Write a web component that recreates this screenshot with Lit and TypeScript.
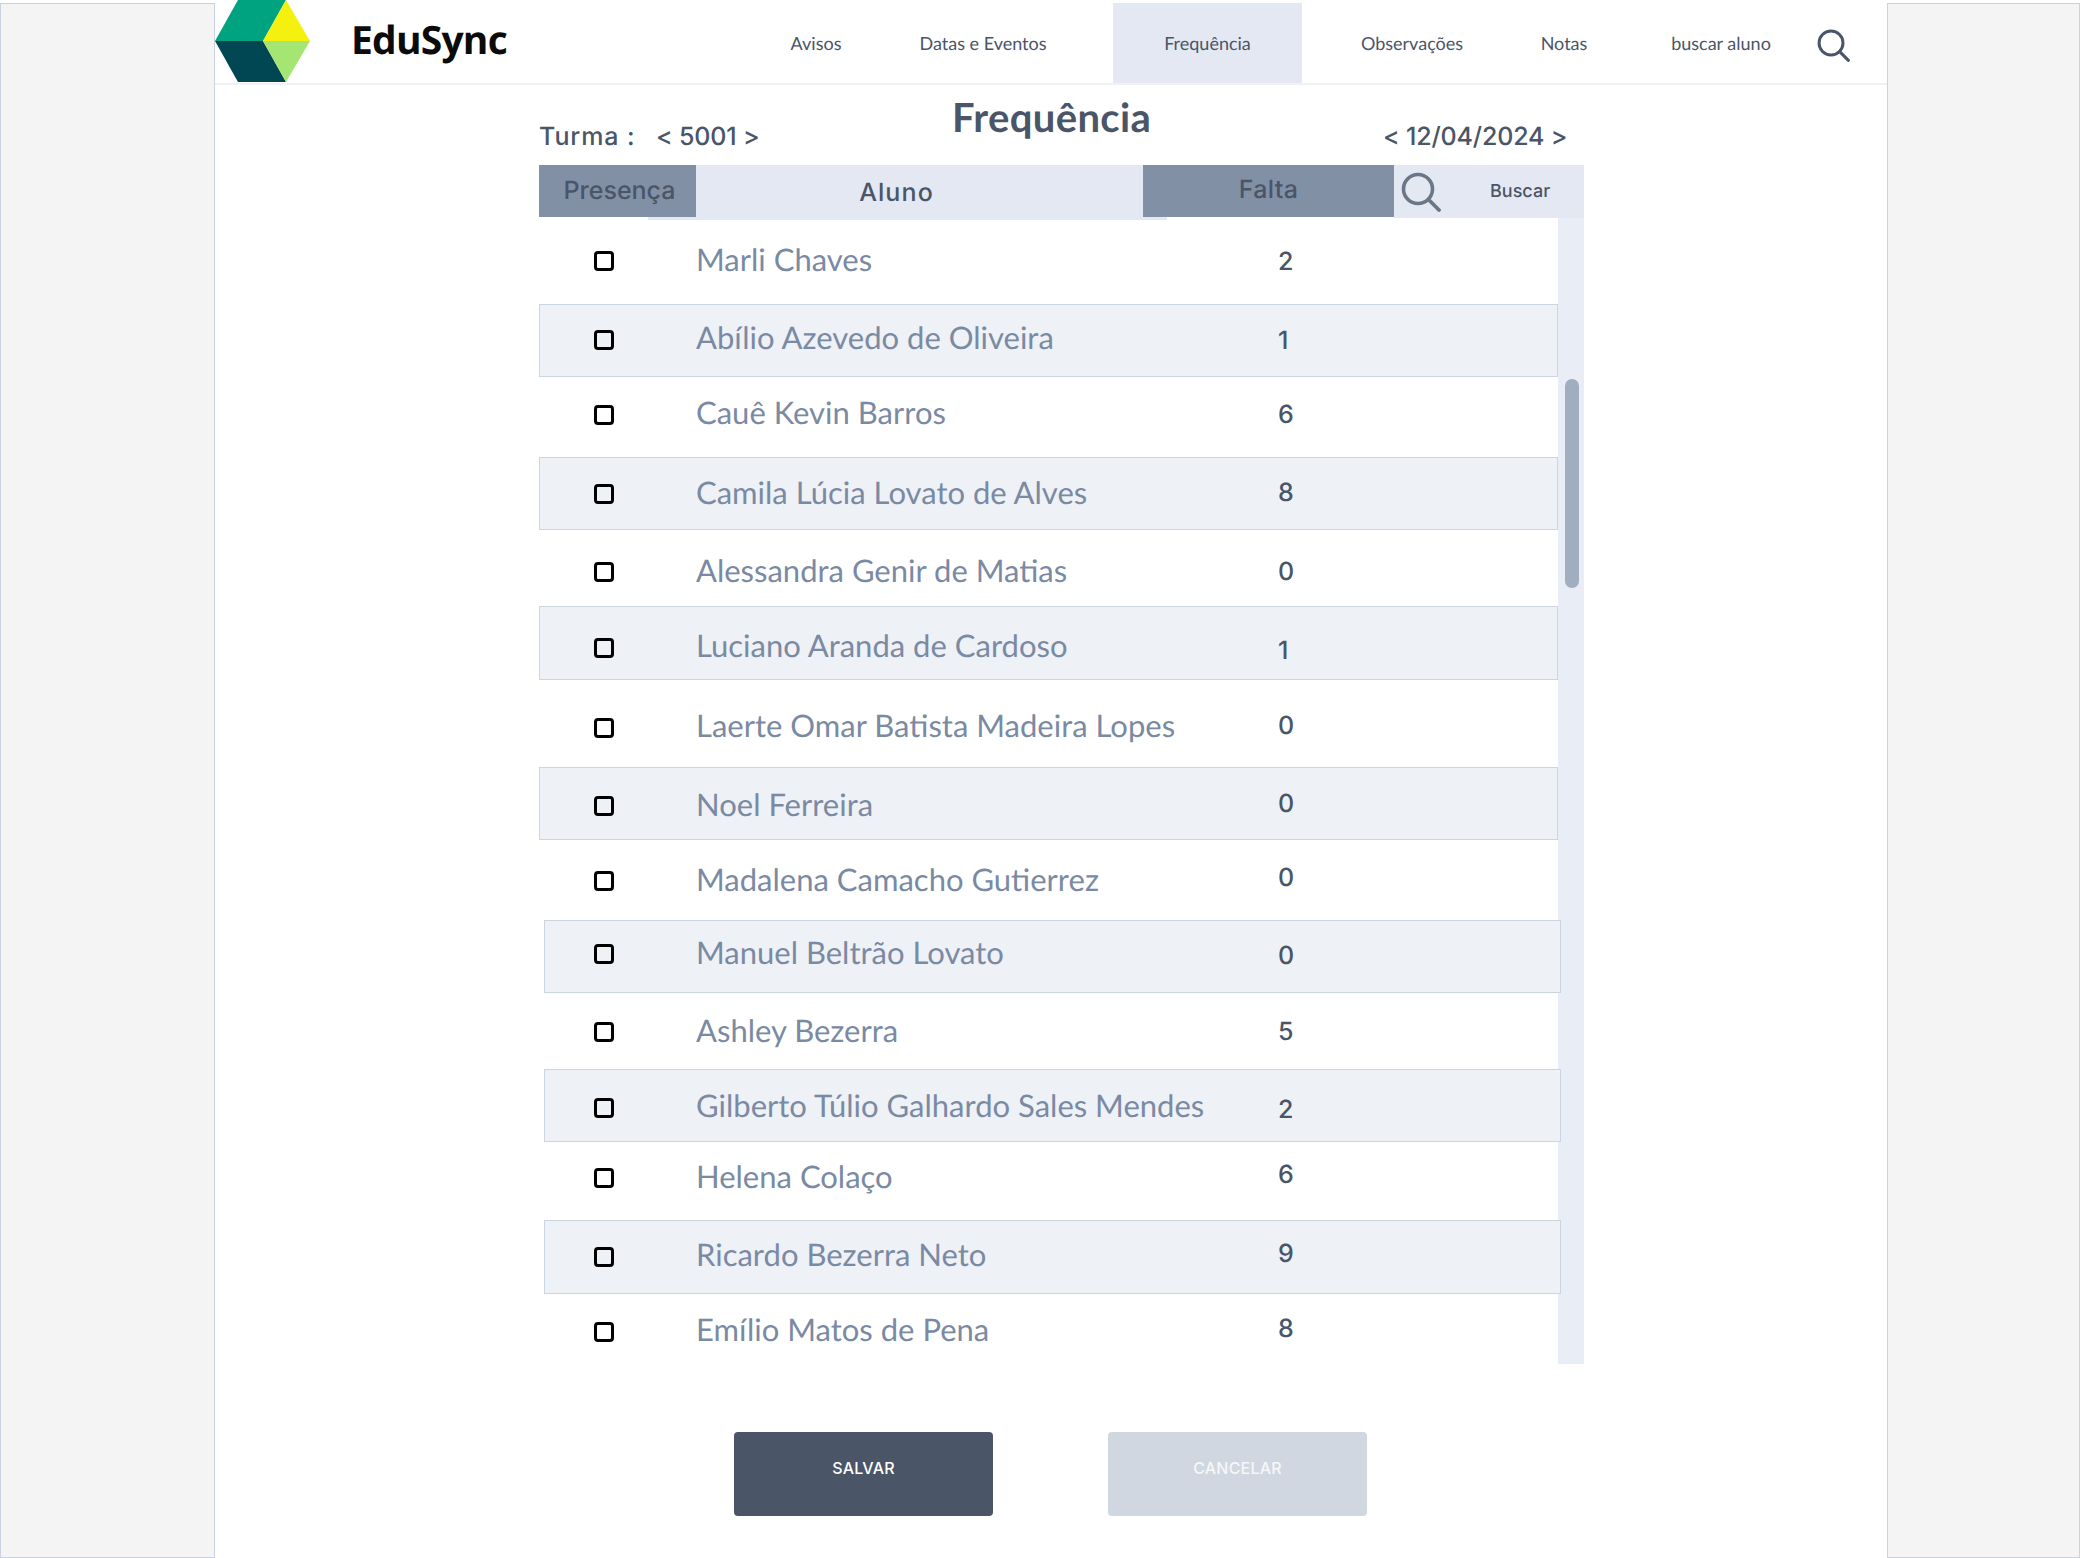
import { LitElement, html, css } from "lit";
import { customElement } from "lit/decorators.js";

const ROWS: [string, string, number, number, number, number, number, boolean, boolean][] = [
  ["Marli Chaves", "2", 218, 86, 259, 262, 261, false, false],
  ["Abílio Azevedo de Oliveira", "1", 304, 73, 337, 341, 340, true, false],
  ["Cauê Kevin Barros", "6", 377, 80, 412, 415, 415, false, false],
  ["Camila Lúcia Lovato de Alves", "8", 457, 73, 492, 493, 494, true, false],
  ["Alessandra Genir de Matias", "0", 530, 76, 570, 572, 572, false, false],
  ["Luciano Aranda de Cardoso", "1", 606, 74, 645, 651, 648, true, false],
  ["Laerte Omar Batista Madeira Lopes", "0", 680, 87, 725, 726, 728, false, false],
  ["Noel Ferreira", "0", 767, 73, 804, 804, 806, true, false],
  ["Madalena Camacho Gutierrez", "0", 840, 80, 879, 878, 881, false, false],
  ["Manuel Beltrão Lovato", "0", 920, 73, 952, 956, 954, true, true],
  ["Ashley Bezerra", "5", 993, 76, 1030, 1032, 1032, false, false],
  ["Gilberto Túlio Galhardo Sales Mendes", "2", 1069, 73, 1105, 1110, 1108, true, true],
  ["Helena Colaço", "6", 1142, 78, 1176, 1175, 1178, false, false],
  ["Ricardo Bezerra Neto", "9", 1220, 74, 1254, 1254, 1257, true, true],
  ["Emílio Matos de Pena", "8", 1294, 70, 1329, 1329, 1332, false, false],
];

const search = (cls: string) => html`<svg class=${cls} viewBox="0 0 40 40" aria-hidden="true"><circle cx="17" cy="17" r="14.5" fill="none" stroke="currentColor" stroke-width="3.6"/><line x1="27.5" y1="27.5" x2="38" y2="38" stroke="currentColor" stroke-width="3.8" stroke-linecap="round"/></svg>`;

@customElement("app-root")
export class AppRoot extends LitElement {
  static styles = css`
    :host { display: flex; width: 2080px; height: 1558px; background: #fff; font-family: Lato, sans-serif; color: #4a5568; overflow: hidden; text-rendering: geometricPrecision; }
    .side { box-sizing: border-box; margin-top: 3px; height: 1555px; background: #f4f4f4; border: 1px solid #c8d2e0; }
    .left { width: 215px; }
    .right { width: 193px; }
    main { width: 1672px; }
    header { display: flex; height: 83px; border-bottom: 2px solid #edf2f7; }
    .logo { width: 96px; height: 82px; display: block; flex: none; }
    .brand { margin-left: 40px; width: 202px; font: 700 39px/80px "Open Sans", sans-serif; color: #0b0b0b; letter-spacing: -0.8px; }
    nav { display: flex; margin-left: 207px; align-items: stretch; }
    .item { display: flex; align-items: center; justify-content: center; font-size: 18px; height: 80px; margin-top: 3px; box-sizing: border-box; }
    .i1 { width: 112px; }
    .i2 { width: 222px; }
    .i3 { width: 189px; margin-left: 19px; background: #e4e8f2; }
    .i4 { width: 220px; }
    .i5 { width: 84px; }
    .i6 { width: 150px; margin-left: 40px; }
    .top-search { width: 33px; height: 33px; margin: 29px 0 0 21px; color: #4a5568; }
    .content { margin-left: 324px; width: 1045px; }
    .titlebar { display: grid; grid-template-columns: 413px 431px 1fr; height: 80px; }
    .meta { font: 500 25px/1 Inter, sans-serif; margin-top: 40px; white-space: nowrap; display: flex; }
    .turma { letter-spacing: 0.9px; width: 117px; }
    .nr { letter-spacing: -0.15px; }
    .title { margin: 0; font: 700 40px/60px Lato, sans-serif; margin-top: 2px; letter-spacing: 0.35px; }
    .thead { display: flex; height: 53px; align-items: flex-start; font: 500 25px/52px Inter, sans-serif; }
    .th { text-align: center; height: 53px; }
    .on { position: relative; z-index: 1; background: #8290a6; height: 52px; }
    .c1 { width: 157px; padding-left: 4px; box-sizing: border-box; }
    .c2 { width: 519px; height: 55px; margin: 0 -24px 0 -48px; background: #e4e8f2; padding-left: 48px; padding-right: 24px; box-sizing: border-box; line-height: 57px; }
    .c2 span { display: inline-block; margin-left: -46px; letter-spacing: 1.1px; }
    .c3 { width: 251px; letter-spacing: 0.3px; line-height: 50px; }
    .c4 { width: 190px; background: #e4e8f2; display: flex; align-items: center; }
    .head-search { width: 40px; height: 40px; margin-left: 7px; color: #6b7686; }
    .c4 span { font: 500 18px Inter, sans-serif; margin-left: 49px; }
    .body { display: flex; }
    .rows { width: 1019px; flex: none; }
    .row { display: grid; grid-template-columns: 55px 102px 582px 1fr; align-items: start; position: relative; z-index: 1; }
    .striped { background: #eef1f6; box-shadow: inset 0 0 0 1px #cbd5e0; }
    .shift { margin-left: 5px; margin-right: -3px; grid-template-columns: 50px 102px 582px 1fr; }
    .row > div { height: 40px; line-height: 40px; }
    .cb { width: 20px; box-sizing: border-box; border: 3px solid #000; border-radius: 4px; }
    .row > .cb { height: 20px; }
    .name { font-size: 31px; color: #7a8aa3; white-space: nowrap; }
    .count { font: 500 25px/40px Inter, sans-serif; }
    .track { width: 26px; background: #e9edf5; height: 1146px; flex: none; }
    .thumb { width: 14px; height: 209px; margin: 161px 0 0 7px; border-radius: 7px; background: #a0aec0; }
    .actions { display: flex; gap: 115px; margin: 68px 0 0 195px; }
    .btn { width: 259px; height: 84px; border-radius: 4px; border: 0; padding: 0 0 12px; font: 500 16px Inter, sans-serif; letter-spacing: 0.2px; color: #fff; background: #4a5568; }
    .muted { background: #d0d7e0; color: #f5f7f9; }
  `;

  render() {
    return html`
      <div class="side left"></div>
      <main>
        <header>
          <svg class="logo" viewBox="0 0 96 82" aria-label="EduSync logo">
            <polygon points="0,41 23,0 71,0 48,41" fill="#00a37f"/>
            <polygon points="71,0 95,41 48,41" fill="#f4f010"/>
            <polygon points="0,41 48,41 71,82 23,82" fill="#004753"/>
            <polygon points="48,41 95,41 71,82" fill="#a5e672"/>
          </svg>
          <div class="brand">EduSync</div>
          <nav>
            <div class="item i1">Avisos</div>
            <div class="item i2">Datas e Eventos</div>
            <div class="item i3">Frequência</div>
            <div class="item i4">Observações</div>
            <div class="item i5">Notas</div>
            <div class="item i6">buscar aluno</div>
          </nav>
          ${search("top-search")}
        </header>
        <div class="content">
          <div class="titlebar">
            <div class="meta"><span class="turma">Turma :</span><span class="nr">&lt; 5001 &gt;</span></div>
            <h1 class="title">Frequência</h1>
            <div class="meta"><span class="nr">&lt; 12/04/2024 &gt;</span></div>
          </div>
          <div class="thead">
            <div class="th on c1">Presença</div>
            <div class="th c2"><span>Aluno</span></div>
            <div class="th on c3">Falta</div>
            <div class="th c4">${search("head-search")}<span>Buscar</span></div>
          </div>
          <div class="body">
            <div class="rows">
              ${ROWS.map(([name, count, top, h, ny, cy, by, striped, shift]) => html`<div class="row ${striped ? "striped" : ""} ${shift ? "shift" : ""}" style="height:${h}px">
                  <span></span>
                  <div class="cb" style="margin-top:${by - top - 10}px"></div>
                  <div class="name" style="margin-top:${ny - top - 20}px">${name}</div>
                  <div class="count" style="margin-top:${cy - top - 20}px">${count}</div>
                </div>`)}
            </div>
            <div class="track"><div class="thumb"></div></div>
          </div>
          <div class="actions">
            <button class="btn">SALVAR</button>
            <button class="btn muted">CANCELAR</button>
          </div>
        </div>
      </main>
      <div class="side right"></div>
    `;
  }
}
